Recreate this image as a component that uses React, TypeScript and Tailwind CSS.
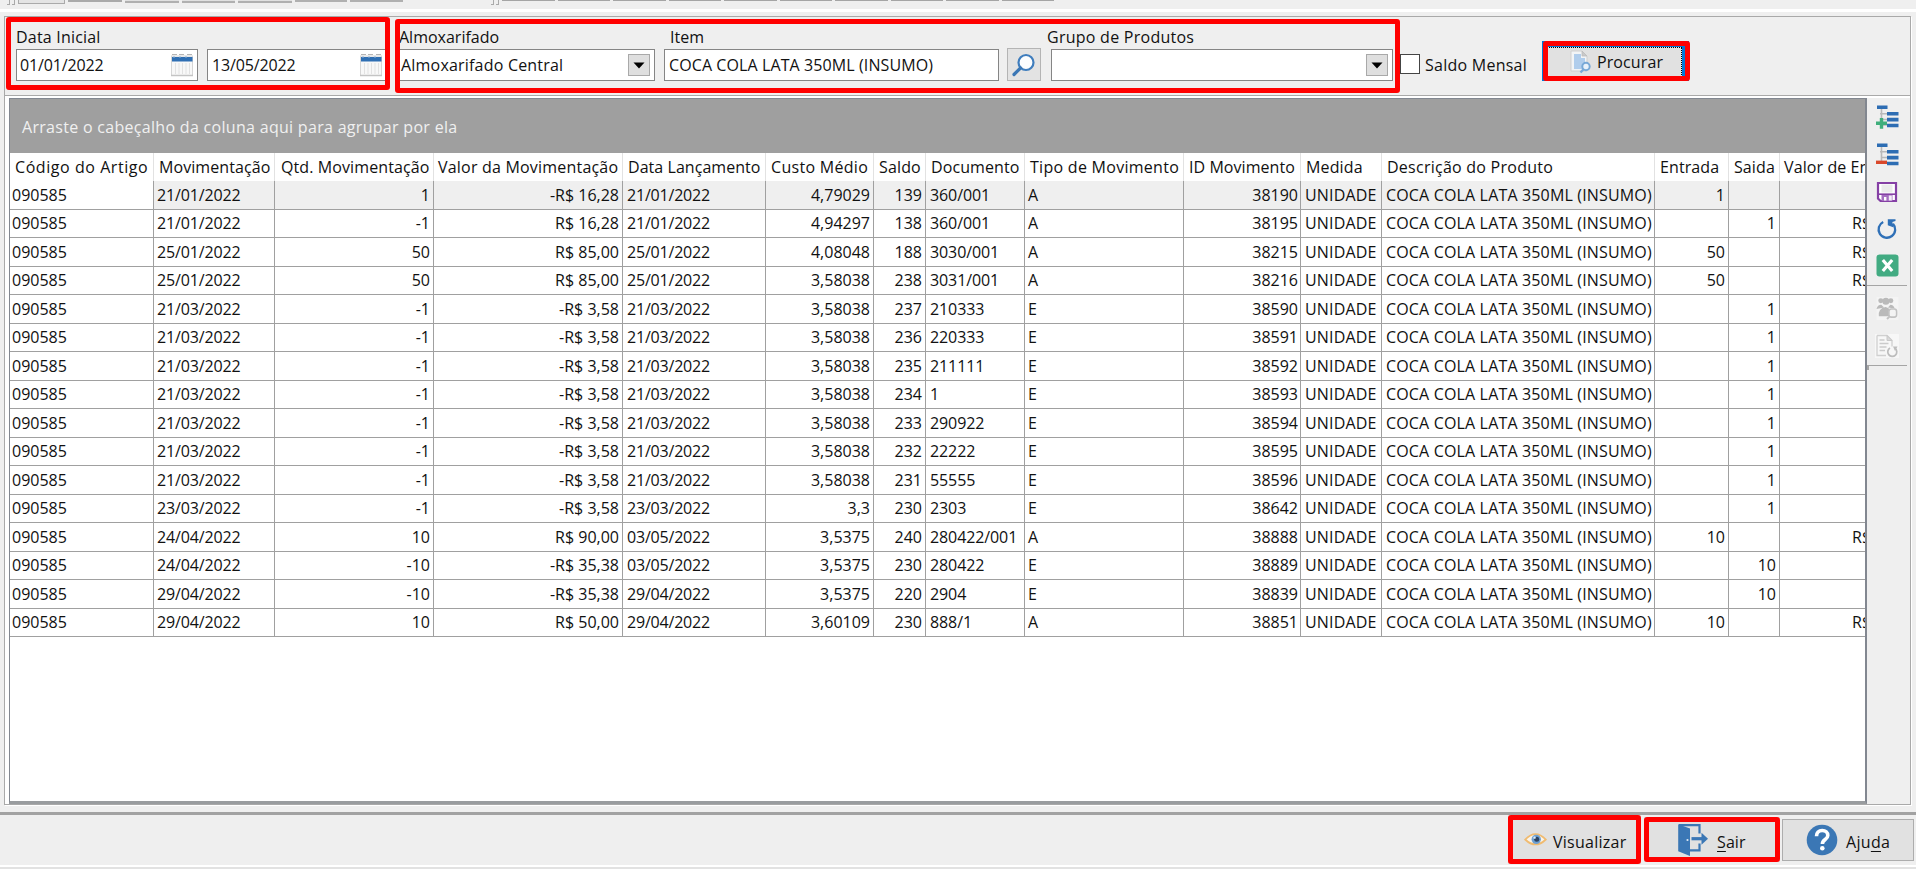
import React from 'react';

type Row = [string, string, string, string, string, string, string, string, string, string, string, string];

const item = 'COCA COLA LATA 350ML (INSUMO)';

const columns = [
  { title: 'Código do Artigo', head: 'pl-[5px] tracking-[0.56px]', cell: 'pl-[2px]' },
  { title: 'Movimentação', head: 'pl-[5px] tracking-[0.08px]', cell: 'pl-[3px] tracking-[-0.15px]' },
  { title: 'Qtd. Movimentação', head: 'pl-[6px] tracking-[0.1px]', cell: 'pr-[3px] justify-end' },
  { title: 'Valor da Movimentação', head: 'pl-[4px] tracking-[0.2px]', cell: 'pr-[3px] justify-end' },
  { title: 'Data Lançamento', head: 'pl-[5px] tracking-[0.05px]', cell: 'pl-[4px] tracking-[-0.2px]' },
  { title: 'Custo Médio', head: 'pl-[5px] tracking-[0.3px]', cell: 'pr-[3px] justify-end' },
  { title: 'Saldo', head: 'pl-[5px] tracking-[0.15px]', cell: 'pr-[3px] justify-end' },
  { title: 'Documento', head: 'pl-[5px] tracking-[0.1px]', cell: 'pl-[4px] tracking-[-0.1px]' },
  { title: 'Tipo de Movimento', head: 'pl-[5px] tracking-[0.28px]', cell: 'pl-[3px]' },
  { title: 'ID Movimento', head: 'pl-[5px] tracking-[0.05px]', cell: 'pr-[2px] justify-end' },
  { title: 'Medida', head: 'pl-[5px] tracking-[0.15px]', cell: 'pl-[4px] tracking-[0.15px]' },
  { title: 'Descrição do Produto', head: 'pl-[5px] tracking-[0.25px]', cell: 'pl-[4px] tracking-[0.16px]' },
  { title: 'Entrada', head: 'pl-[5px] tracking-[0.1px]', cell: 'pr-[3px] justify-end' },
  { title: 'Saida', head: 'pl-[5px] tracking-[0.1px]', cell: 'pr-[3px] justify-end' },
  { title: 'Valor de Entrada', head: 'pl-[4px] tracking-[0.1px]', cell: 'pr-[4px] justify-end' },
];

const GRID = 'grid grid-cols-[144px_121px_159px_189px_143px_108px_52px_99px_159px_117px_81px_273px_74px_51px_141px]';

// movimentação, qtd, valor, lançamento, custo, saldo, documento, tipo, id, entrada, saida, valor de entrada
const rows: Row[] = [
  ['21/01/2022', '1', '-R$ 16,28', '21/01/2022', '4,79029', '139', '360/001', 'A', '38190', '1', '', ''],
  ['21/01/2022', '-1', 'R$ 16,28', '21/01/2022', '4,94297', '138', '360/001', 'A', '38195', '', '1', 'R$ 16,28'],
  ['25/01/2022', '50', 'R$ 85,00', '25/01/2022', '4,08048', '188', '3030/001', 'A', '38215', '50', '', 'R$ 85,00'],
  ['25/01/2022', '50', 'R$ 85,00', '25/01/2022', '3,58038', '238', '3031/001', 'A', '38216', '50', '', 'R$ 85,00'],
  ['21/03/2022', '-1', '-R$ 3,58', '21/03/2022', '3,58038', '237', '210333', 'E', '38590', '', '1', ''],
  ['21/03/2022', '-1', '-R$ 3,58', '21/03/2022', '3,58038', '236', '220333', 'E', '38591', '', '1', ''],
  ['21/03/2022', '-1', '-R$ 3,58', '21/03/2022', '3,58038', '235', '211111', 'E', '38592', '', '1', ''],
  ['21/03/2022', '-1', '-R$ 3,58', '21/03/2022', '3,58038', '234', '1', 'E', '38593', '', '1', ''],
  ['21/03/2022', '-1', '-R$ 3,58', '21/03/2022', '3,58038', '233', '290922', 'E', '38594', '', '1', ''],
  ['21/03/2022', '-1', '-R$ 3,58', '21/03/2022', '3,58038', '232', '22222', 'E', '38595', '', '1', ''],
  ['21/03/2022', '-1', '-R$ 3,58', '21/03/2022', '3,58038', '231', '55555', 'E', '38596', '', '1', ''],
  ['23/03/2022', '-1', '-R$ 3,58', '23/03/2022', '3,3', '230', '2303', 'E', '38642', '', '1', ''],
  ['24/04/2022', '10', 'R$ 90,00', '03/05/2022', '3,5375', '240', '280422/001', 'A', '38888', '10', '', 'R$ 90,00'],
  ['24/04/2022', '-10', '-R$ 35,38', '03/05/2022', '3,5375', '230', '280422', 'E', '38889', '', '10', ''],
  ['29/04/2022', '-10', '-R$ 35,38', '29/04/2022', '3,5375', '220', '2904', 'E', '38839', '', '10', ''],
  ['29/04/2022', '10', 'R$ 50,00', '29/04/2022', '3,60109', '230', '888/1', 'A', '38851', '10', '', 'R$ 50,00'],
];

const Highlight = ({ className }: { className: string }) => (
  <div className={`absolute z-10 border-5 border-[#ff0000] rounded-[3px] pointer-events-none ${className}`} />
);

const CalendarIcon = () => (
  <svg width="24" height="25" viewBox="0 0 24 25">
    <rect x="1.5" y="3" width="21" height="19.5" fill="#f8f8f8" stroke="#d6d6d6" />
    <path d="M2 1.5h5M9 1.5h5M17 1.5h5" stroke="#b5b5b5" />
    <rect x="2" y="4" width="20.5" height="4.5" fill="#2f6fb3" />
    <path d="M3 4h18" stroke="#8fb2d6" strokeDasharray="2 4" />
    <path d="M5.5 10v11M9 10v11M12.5 10v11M16 10v11M19.5 10v11" stroke="#e2e2e2" />
    <path d="M1 22.5h22" stroke="#c4c4c4" strokeWidth="1.5" />
  </svg>
);

const DateField = ({ value, className }: { value: string; className: string }) => (
  <div className={`h-8 bg-white border-[1.5px] border-[#858585] flex items-center justify-between pr-[3px] ${className}`}>
    <span className="tracking-[-0.15px]">{value}</span>
    <CalendarIcon />
  </div>
);

const Combo = ({ value, className }: { value?: string; className: string }) => (
  <div className={`h-8 bg-white border border-[#858585] flex items-center justify-between pl-[2px] pr-[4px] ${className}`}>
    <span className="tracking-[0.2px]">{value}</span>
    <div className="w-[22px] h-[22px] bg-[#dfdfdf] border border-[#a9a9a9] flex items-center justify-center">
      <svg width="12" height="7" viewBox="0 0 12 7">
        <path d="M0.5 0.5h11L6 6.5z" fill="#000" />
      </svg>
    </div>
  </div>
);

const TreeIcon = ({ minus }: { minus?: boolean }) => (
  <svg width="24" height="24" viewBox="0 0 24 24">
    <path d="M6.5 4v6M5 8.7h8M6.5 14.5h6M6.5 20h6M6.5 9v11" stroke="#b9b9b9" strokeWidth="1.6" fill="none" />
    <path d="M2 2.3h10.5M12 8.7h11.5M12 14.6h11.5M12 20.5h11.5" stroke="#2d6db3" strokeWidth="3.6" />
    {minus ? (
      <path d="M1 19.3h11" stroke="#d9482b" strokeWidth="3.4" />
    ) : (
      <path d="M1 18.3h11M6.5 13v10.8" stroke="#3fae7c" strokeWidth="3.4" />
    )}
  </svg>
);

const SaveIcon = () => (
  <svg width="22" height="22" viewBox="0 0 22 22">
    <path d="M2 2h18v18H4.5L2 17.5z" fill="#fff" stroke="#8540a5" strokeWidth="2.2" />
    <rect x="5.5" y="3.5" width="11" height="8" fill="#ebebeb" />
    <path d="M2 13.2h18" stroke="#8540a5" strokeWidth="1.6" />
    <rect x="5.5" y="14" width="11" height="6" fill="#a56fc0" />
    <rect x="8" y="16" width="2.4" height="3.5" fill="#fff" />
    <rect x="12.8" y="14.5" width="3" height="5" fill="#f3ecf7" />
  </svg>
);

const RefreshIcon = () => (
  <svg width="22" height="22" viewBox="0 0 22 22">
    <path d="M7.2 4A8.3 8.3 0 1 0 17 5.8" fill="none" stroke="#2f70b7" strokeWidth="2.3" />
    <path d="M11.8 1.2h7.7V3l-3.2 1 1.5 5.4-6-2.2z" fill="#2f70b7" />
  </svg>
);

const ExcelIcon = () => (
  <svg width="23" height="23" viewBox="0 0 23 23">
    <rect x="0.5" y="0.5" width="22" height="22" rx="3" fill="#42ab82" />
    <path d="M6.8 6l9.4 11M16.2 6L6.8 17" stroke="#fff" strokeWidth="3.2" />
  </svg>
);

const UsersIcon = () => (
  <svg width="23" height="23" viewBox="0 0 23 24">
    <rect width="23" height="24" fill="#f4f4f4" />
    <g fill="#bababa">
      <circle cx="4.5" cy="4" r="2.6" />
      <circle cx="15" cy="4" r="2.6" />
      <circle cx="9.8" cy="4.5" r="3.7" />
      <path d="M0 12.5q1-4.5 5-4.5l3 3zM19 12q-1-4-4.500-4l-2.500 3z" />
      <path d="M2.500 20q-1-8 7-9.500q6 1 6 9.500z" />
    </g>
    <rect x="13" y="12.500" width="8" height="8.500" rx="2.500" fill="#f4f4f4" stroke="#c2c2c2" strokeWidth="1.6" />
    <path d="M13.500 20.500l-2.500 2.500" stroke="#c2c2c2" strokeWidth="2" />
  </svg>
);

const ReportIcon = () => (
  <svg width="24" height="24" viewBox="0 0 24 24">
    <rect width="24" height="24" fill="#f7f7f7" />
    <path d="M2 1.5h10l5 5v6M2 1.5v20h9" fill="none" stroke="#d0d0d0" strokeWidth="1.3" />
    <path d="M12 1.500v5h5z" fill="#d9d9d9" stroke="#c8c8c8" />
    <path d="M4.500 6h5M4.500 9.500h9M4.500 13h7M4.500 16.500h5.500" stroke="#cbcbcb" strokeWidth="1.6" />
    <path d="M15 14a4.500 4.500 0 1 0 5 0.300" fill="none" stroke="#bdbdbd" strokeWidth="1.7" />
    <path d="M18 12.500h4.500l-2.500 4.500z" fill="#bdbdbd" />
  </svg>
);

const SearchDocIcon = () => (
  <svg width="22" height="24" viewBox="0 0 22 24">
    <path d="M1 1h11l5 5v15H1z" fill="#f2f4f6" stroke="#cfcfcf" />
    <path d="M12 1v5h5z" fill="#c9c9c9" stroke="#bcbcbc" strokeWidth="0.8" />
    <path d="M4 4h7v4h4v11H4z" fill="#b0cdec" />
    <circle cx="16" cy="16.5" r="3.7" fill="#e9f2fa" stroke="#78a8d6" strokeWidth="2" />
    <path d="M13.3 19.5L10.500 22.500" stroke="#78a8d6" strokeWidth="2.4" />
  </svg>
);

const EyeIcon = () => (
  <svg width="23" height="15" viewBox="0 0 24 16">
    <path d="M1 8Q12-3.5 23 8Q12 18.5 1 8z" fill="#f8f4ec" stroke="#f0bb70" strokeWidth="1.9" />
    <circle cx="12.8" cy="7.8" r="5" fill="#6c9fd2" />
    <circle cx="13.3" cy="7.8" r="2.7" fill="#2b4260" />
    <circle cx="11" cy="6" r="1.3" fill="#dcebf8" />
  </svg>
);

const ExitIcon = () => (
  <svg width="32" height="34" viewBox="0 0 32 34">
    <path d="M2 2.2h20.500v8.300M22.500 20.500v6.800H12" fill="none" stroke="#3b77b5" strokeWidth="2.2" />
    <path d="M1.200 1.200L13 5.500V33L1.200 28.200z" fill="#3b77b5" />
    <circle cx="10.5" cy="17" r="1.1" fill="#dfe9f3" />
    <path d="M14.500 15.700h12" stroke="#3b77b5" strokeWidth="3.2" />
    <path d="M24.500 9.700l6.500 6-6.500 6z" fill="#3b77b5" />
  </svg>
);

const HelpIcon = () => (
  <svg width="32" height="32" viewBox="0 0 32 32">
    <circle cx="16" cy="16" r="15.3" fill="#3b77b5" />
    <path d="M10.5 12.2c0-3.6 2.3-5.7 5.700-5.700s5.600 2 5.600 4.900c0 4.300-5.400 4-5.400 8.600" fill="none" stroke="#fff" strokeWidth="3.6" />
    <circle cx="16.3" cy="24.300" r="2.300" fill="#fff" />
  </svg>
);

const Toolbar = () => (
  <div className="h-[9px] flex items-start shrink-0">
    <div className="ml-[7px] w-[3px] h-[5px] border-r border-b border-[#aaa]" />
    <div className="ml-[2px] w-[3px] h-[5px] border-r border-b border-[#aaa]" />
    <div className="ml-[3px] flex gap-[3px]">
      <div className="w-[47px] h-1 bg-[#e4e4e4] border border-t-0 border-[#aaa]" />
      <div className="w-[54px] h-[2px] bg-[#aaa]" />
      <div className="w-[54px] h-[3px] bg-[#e1e1e1] border-b-2 border-[#b0b0b0]" />
      <div className="w-[53px] h-[3px] bg-[#e1e1e1] border-b-2 border-[#b0b0b0]" />
      <div className="w-[54px] h-[3px] bg-[#e1e1e1] border-b-2 border-[#b0b0b0]" />
      <div className="w-[52px] h-[2px] bg-[#b0b0b0]" />
      <div className="w-[53px] h-[2px] bg-[#b0b0b0]" />
    </div>
    <div className="ml-[88px] w-[3px] h-[5px] border-r border-b border-[#aaa]" />
    <div className="ml-[2px] w-[3px] h-[5px] border-r border-b border-[#aaa]" />
    <div className="ml-[3px] flex gap-[3px]">
      {Array.from({ length: 10 }).map((_, i) => (
        <div key={i} className="w-[52.5px] h-px bg-[#a5a5a5]" />
      ))}
    </div>
  </div>
);

const Filters = () => (
  <div className="relative h-[79px] shrink-0 flex items-start pt-[10px] border-b border-[#a9a9a9]">
    <div className="ml-[11px] w-[382px]">
      <div className="h-[22px] leading-5 tracking-[0.2px]">Data Inicial</div>
      <div className="flex">
        <DateField value="01/01/2022" className="w-[182px] pl-[3px]" />
        <DateField value="13/05/2022" className="ml-[9px] w-[180px] pl-[4px]" />
      </div>
    </div>
    <div className="w-[257px]">
      <div className="h-[22px] leading-5 pl-[1px]">Almoxarifado</div>
      <Combo value="Almoxarifado Central" className="w-[257px]" />
    </div>
    <div className="ml-[9px] w-[335px]">
      <div className="h-[22px] leading-5 pl-[6px]">Item</div>
      <div className="h-8 bg-white border border-[#858585] flex items-center pl-[4px] tracking-[0.1px]">{item}</div>
    </div>
    <div className="ml-[8px] mt-[21px] w-[34px] h-[33px] bg-[#e3e3e3] border border-[#b4b4b4] flex items-center justify-center">
      <svg width="24" height="24" viewBox="0 0 24 24">
        <circle cx="14" cy="9.5" r="7.5" fill="#fcfdfe" stroke="#3f7dbd" strokeWidth="2.2" />
        <path d="M8.5 15L2 21.500" stroke="#3b77b5" strokeWidth="3.2" strokeLinecap="round" />
      </svg>
    </div>
    <div className="ml-[6px] w-[348px]">
      <div className="h-[22px] leading-5 tracking-[0.26px]">Grupo de Produtos</div>
      <Combo className="ml-[4px] w-[342px]" />
    </div>
    <div className="ml-[5px] mt-[26px] flex items-center gap-[5px]">
      <div className="w-[20px] h-[20px] bg-white border-[1.5px] border-[#444]" />
      <span className="leading-5 mt-[2px] tracking-[0.25px]">Saldo Mensal</span>
    </div>
    <div className="absolute left-[1537px] top-[24px] w-[147px] h-[40px] p-[4px] bg-[#0078d7]">
      <div className="w-[135px] h-[30px] ml-[1px] mt-[2px] bg-[#e1e1e1] border border-dotted border-black flex items-center pl-[22px]">
        <SearchDocIcon />
        <span className="ml-[5px] tracking-[0.1px]">Procurar</span>
      </div>
      <Highlight className="left-[1px] top-0 w-[147px] h-[40px]" />
    </div>
    <Highlight className="left-[1px] top-0 w-[384px] h-[73px]" />
    <Highlight className="left-[390px] top-[2px] w-[1005px] h-[74px]" />
  </div>
);

const DataGrid = () => (
  <div className="w-[1858px] bg-white border border-[#828790] border-r-2 border-b-[3px] border-b-[#999c9f] overflow-hidden">
    <div className="h-[54px] bg-[#9f9f9f] text-[#f0f0f0] flex items-center pl-[12px] pt-[2px] tracking-[0.3px]">
      Arraste o cabeçalho da coluna aqui para agrupar por ela
    </div>
    <div className={`${GRID} h-[28px] w-[1911px]`}>
      {columns.map((col) => (
        <div key={col.title} className={`border-r border-[#e2e2e2] flex items-center whitespace-nowrap ${col.head}`}>
          {col.title}
        </div>
      ))}
    </div>
    {rows.map((row, r) => {
      const cells = ['090585', ...row.slice(0, 9), 'UNIDADE', item, ...row.slice(9)];
      return (
        <div key={r} className={`${GRID} h-[28.5px] w-[1911px] ${r === 0 ? 'bg-[#efefef]' : ''}`}>
          {cells.map((text, c) => (
            <div
              key={c}
              className={`border-r border-b border-[#a0a0a0] flex items-center whitespace-nowrap leading-5 ${columns[c].cell} ${r === 0 && c === 0 ? 'bg-white' : ''}`}
            >
              {text}
            </div>
          ))}
        </div>
      );
    })}
  </div>
);

const SideBar = () => (
  <div className="flex-1 pt-[1px]">
    <div className="w-[40px] h-[187px] border-b border-[#a5a5a5] flex flex-col items-center pt-[6px] gap-[14px]">
      <TreeIcon />
      <TreeIcon minus />
      <SaveIcon />
      <div className="mt-[1px]"><RefreshIcon /></div>
      <ExcelIcon />
    </div>
    <div className="w-[40px] h-[80px] border-b border-[#a5a5a5] flex flex-col items-center pt-[11px] gap-[14px]">
      <UsersIcon />
      <ReportIcon />
    </div>
    <div className="w-[2px] h-[4px] bg-[#a5a5a5]" />
  </div>
);

const Footer = () => (
  <div className="h-[57px] shrink-0 border-t-[3px] border-[#a2a2a2] flex flex-col">
    <div className="h-[50px] flex items-start">
      <div className="relative ml-[1508px] w-[133px] h-[49px] bg-[#e1e1e1] flex items-center pl-[16px]">
        <EyeIcon />
        <span className="ml-[6px] mt-[4px] tracking-[0.25px]">Visualizar</span>
        <Highlight className="inset-0" />
      </div>
      <div className="relative ml-[3px] mt-[2px] w-[136px] h-[45px] bg-[#e1e1e1] flex items-center pl-[33px]">
        <ExitIcon />
        <span className="ml-[8px] mt-[4px] tracking-[0.1px]"><u className="underline-offset-3">S</u>air</span>
        <Highlight className="inset-0" />
      </div>
      <div className="ml-[2px] mt-[4px] w-[132px] h-[42px] bg-[#e1e1e1] border border-[#adadad] flex items-center pl-[23px]">
        <HelpIcon />
        <span className="ml-[8px] mt-[3px] tracking-[0.3px]">Aju<u className="underline-offset-3">d</u>a</span>
      </div>
    </div>
    <div className="h-[2px] bg-white" />
    <div className="h-[2px] bg-[#e2e2e2]" />
  </div>
);

const App: React.FC = () => {
  return (
    <div className="w-[1916px] h-[869px] overflow-hidden bg-[#efefef] flex flex-col text-base text-[#111] font-['Open_Sans','Noto_Sans',sans-serif]">
      <Toolbar />
      <div className="h-[3px] bg-white shrink-0" />
      <div className="mt-[4px] ml-[4px] w-[1907px] h-[789px] shrink-0 border border-[#a9a9a9] shadow-[1px_1px_0_#fff] flex flex-col">
        <Filters />
        <div className="flex-1 flex border-t-2 border-l-4 border-white">
          <DataGrid />
          <SideBar />
        </div>
      </div>
      <div className="flex-1" />
      <Footer />
    </div>
  );
};

export default App;
